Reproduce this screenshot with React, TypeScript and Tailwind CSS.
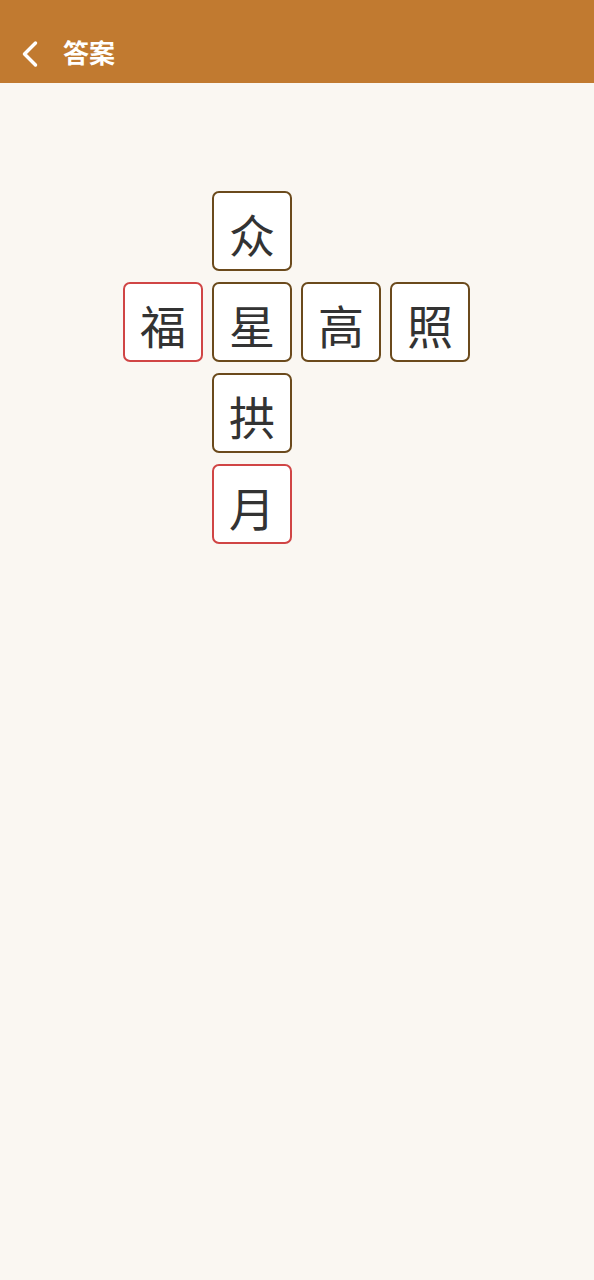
import { ChevronLeft } from "lucide-react";

type Cell = { ch: string; col: number; row: number; red?: boolean };

const cells: Cell[] = [
  { ch: "众", col: 2, row: 1 },
  { ch: "福", col: 1, row: 2, red: true },
  { ch: "星", col: 2, row: 2 },
  { ch: "高", col: 3, row: 2 },
  { ch: "照", col: 4, row: 2 },
  { ch: "拱", col: 2, row: 3 },
  { ch: "月", col: 2, row: 4, red: true },
];

const colClass: Record<number, string> = {
  1: "col-start-1",
  2: "col-start-2",
  3: "col-start-3",
  4: "col-start-4",
};
const rowClass: Record<number, string> = {
  1: "row-start-1",
  2: "row-start-2",
  3: "row-start-3",
  4: "row-start-4",
};

export default function App() {
  return (
    <div
      className="min-h-screen flex flex-col bg-[#faf7f2]"
      style={{ fontFamily: '"Noto Sans", "Noto Sans CJK SC", sans-serif' }}
    >
      <header className="h-[83px] bg-[#c17a30] flex items-center pl-[8px] pt-[22px]">
        <ChevronLeft className="w-[44px] h-[44px] text-white mt-[3px]" strokeWidth={1.9} />
        <h1 className="ml-[11px] text-[26px] font-bold text-white leading-none">答案</h1>
      </header>
      <main className="flex-1 flex justify-center pt-[108px]">
        <div className="grid grid-cols-[repeat(4,80px)] grid-rows-[repeat(4,80px)] gap-x-[9px] gap-y-[11px] ml-[-1px]">
          {cells.map((c) => (
            <div
              key={c.ch}
              className={`${colClass[c.col]} ${rowClass[c.row]} w-[80px] h-[80px] rounded-[7px] border-2 bg-white flex items-center justify-center text-[46px] text-[#333333] ${
                c.red ? "border-[#d04545]" : "border-[#6b4a1c]"
              }`}
            >
              <span className="leading-none mt-[7px]">{c.ch}</span>
            </div>
          ))}
        </div>
      </main>
    </div>
  );
}
